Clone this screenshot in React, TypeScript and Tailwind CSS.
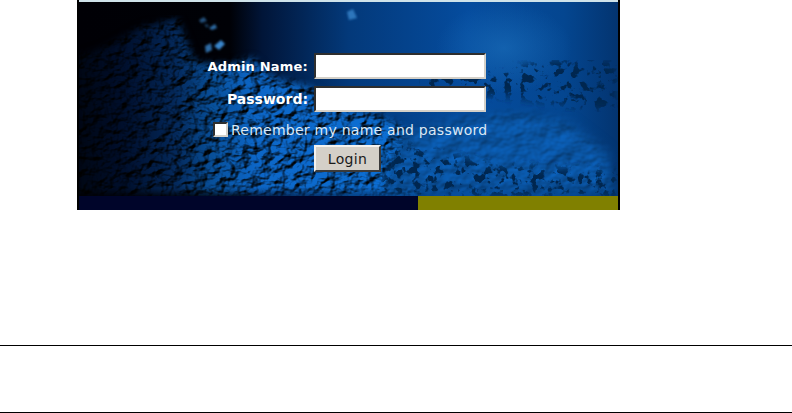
import React from 'react';

// satellite-style picture behind the login form
const TerrainBackdrop: React.FC = () => (
    <svg className="absolute inset-0 w-full h-full" viewBox="0 0 539 196" preserveAspectRatio="none">
        <defs>
            <linearGradient id="sea" x1="0" y1="0" x2="1" y2="0">
                <stop offset="0" stopColor="#000005" />
                <stop offset="0.28" stopColor="#000106" />
                <stop offset="0.34" stopColor="#011538" />
                <stop offset="0.5" stopColor="#03397a" />
                <stop offset="0.72" stopColor="#054c9e" />
                <stop offset="0.9" stopColor="#044690" />
                <stop offset="1" stopColor="#033470" />
            </linearGradient>
            <radialGradient id="glow">
                <stop offset="0" stopColor="#1c70bc" stopOpacity="0.6" />
                <stop offset="1" stopColor="#1c70bc" stopOpacity="0" />
            </radialGradient>
            <linearGradient id="landFade" x1="0" y1="0" x2="1" y2="0">
                <stop offset="0" stopColor="#000208" />
                <stop offset="0.18" stopColor="#000c24" />
                <stop offset="0.32" stopColor="#032048" />
                <stop offset="0.42" stopColor="#06407c" />
                <stop offset="0.54" stopColor="#0a52a0" />
                <stop offset="1" stopColor="#0a5aac" />
            </linearGradient>
            <filter id="relief" x="0" y="0" width="100%" height="100%" colorInterpolationFilters="sRGB">
                <feGaussianBlur in="SourceGraphic" stdDeviation="5" result="base" />
                <feTurbulence type="fractalNoise" baseFrequency="0.09 0.12" numOctaves="3" seed="11" result="noise" />
                <feDiffuseLighting in="noise" surfaceScale="6" diffuseConstant="1.1" lightingColor="#ffffff" result="lit">
                    <feDistantLight azimuth="225" elevation="50" />
                </feDiffuseLighting>
                <feComposite in="lit" in2="base" operator="arithmetic" k1="1.25" k2="0" k3="0" k4="0" />
                <feComposite in2="base" operator="in" />
                <feGaussianBlur stdDeviation="0.5" />
            </filter>
            <filter id="smooth" x="0" y="0" width="100%" height="100%" colorInterpolationFilters="sRGB">
                <feGaussianBlur in="SourceGraphic" stdDeviation="7" result="base" />
                <feTurbulence type="fractalNoise" baseFrequency="0.05 0.07" numOctaves="3" seed="5" result="noise" />
                <feDiffuseLighting in="noise" surfaceScale="2" diffuseConstant="1.05" lightingColor="#ffffff" result="lit">
                    <feDistantLight azimuth="225" elevation="56" />
                </feDiffuseLighting>
                <feComposite in="lit" in2="base" operator="arithmetic" k1="1.1" k2="0" k3="0" k4="0" />
                <feComposite in2="base" operator="in" />
                <feGaussianBlur stdDeviation="0.7" />
            </filter>
            <filter id="specks" x="0" y="0" width="100%" height="100%">
                <feGaussianBlur in="SourceGraphic" stdDeviation="4" result="base" />
                <feTurbulence type="fractalNoise" baseFrequency="0.12" numOctaves="3" seed="3" />
                <feColorMatrix values="0 0 0 0 0  0 0 0 0 0.02  0 0 0 0 0.08  7 7 0 0 -7.3" />
                <feComposite in2="base" operator="in" />
                <feGaussianBlur stdDeviation="0.5" />
            </filter>
            <filter id="soft">
                <feGaussianBlur stdDeviation="1" />
            </filter>
        </defs>
        <rect width="539" height="196" fill="url(#sea)" />
        <ellipse cx="425" cy="48" rx="68" ry="46" fill="url(#glow)" />
        {/* west coast, large landmass */}
        <path
            d="M-20 196 L-20 60 L25 45 L60 25 L100 15 L118 60 L150 62 L175 55 L195 75 L235 85 L265 105 L300 112 L330 128 L345 196 Z"
            fill="url(#landFade)"
            filter="url(#relief)"
        />
        {/* east landmass */}
        <path
            d="M320 130 L390 112 L440 108 L490 118 L532 150 L539 196 L300 196 Z"
            fill="#0a58aa"
            filter="url(#smooth)"
        />
        <path d="M340 112 Q390 90 440 98 Q480 104 535 112 L539 62 L470 60 L420 72 L345 70 Z" fill="#000a1c" filter="url(#specks)" />
        <path d="M300 196 L310 140 L420 165 L539 170 L539 196 Z" fill="#000814" filter="url(#specks)" />
        {/* small bright islands */}
        <g fill="#3a86cc" filter="url(#soft)">
            <path d="M130 28 L136 24 L138 28 L133 30 Z" opacity="0.8" />
            <path d="M120 20 L125 17 L128 21 L122 23 Z" opacity="0.6" />
            <path d="M125 24 L130 25 L128 28 Z" opacity="0.5" />
            <path d="M135 46 L142 40 L146 44 L140 50 Z" />
            <path d="M126 46 L132 43 L133 50 L127 53 Z" opacity="0.8" />
            <path d="M268 12 L274 9 L278 18 L270 20 Z" opacity="0.8" />
        </g>
    </svg>
);

const fieldClass =
    'w-[172px] h-[26px] bg-white border-2 border-t-[#2e2e2e] border-l-[#2e2e2e] border-r-[#d4d0c8] border-b-[#d4d0c8] outline-none';

const App: React.FC = () => {
    return (
        <div className="w-[792px] h-[413px] bg-white overflow-hidden font-['DejaVu_Sans',sans-serif]">
            <div className="relative w-[543px] h-[210px] ml-[77px] border-x-2 border-black flex flex-col">
                <div className="relative h-[196px]">
                    <TerrainBackdrop />
                    <div className="absolute inset-x-0 top-0 h-[2px] bg-[#cfe3ea]" />
                    <form className="relative flex flex-col pt-[53px]" onSubmit={(e) => e.preventDefault()}>
                        <div className="flex items-center h-[26px]">
                            <label className="w-[229px] text-right text-[13px] tracking-[0.2px] leading-none font-bold text-white">Admin Name:</label>
                            <input className={`${fieldClass} ml-[6px]`} />
                        </div>
                        <div className="flex items-center h-[26px] mt-[7px]">
                            <label className="w-[229px] text-right text-[14px] leading-none font-bold text-white">Password:</label>
                            <input type="password" className={`${fieldClass} ml-[6px]`} />
                        </div>
                        <div className="flex items-center h-[17px] mt-[9px] ml-[134px]">
                            <span className="w-[15px] h-[15px] bg-white border-2 border-t-[#2e2e2e] border-l-[#2e2e2e] border-r-[#d4d0c8] border-b-[#d4d0c8]" />
                            <span className="ml-[3px] text-[14px] tracking-[0.25px] leading-none text-[#dbe8f4] whitespace-nowrap">Remember my name and password</span>
                        </div>
                        <button
                            type="submit"
                            className="w-[67px] h-[27px] mt-[7px] ml-[235px] bg-[#d4d0c8] text-[14px] tracking-[0.3px] leading-none text-[#1a1a1a] border-2 border-t-[#f4f2ee] border-l-[#f4f2ee] border-r-[#3a3a3a] border-b-[#3a3a3a]"
                        >
                            Login
                        </button>
                    </form>
                </div>
                <div className="flex h-[14px]">
                    <div className="w-[339px] bg-[#00052a]" />
                    <div className="flex-1 bg-[#808000]" />
                </div>
            </div>
            <div className="mt-[135px] h-[1px] bg-black" />
            <div className="mt-[66px] h-[1px] bg-black" />
        </div>
    );
};

export default App;
